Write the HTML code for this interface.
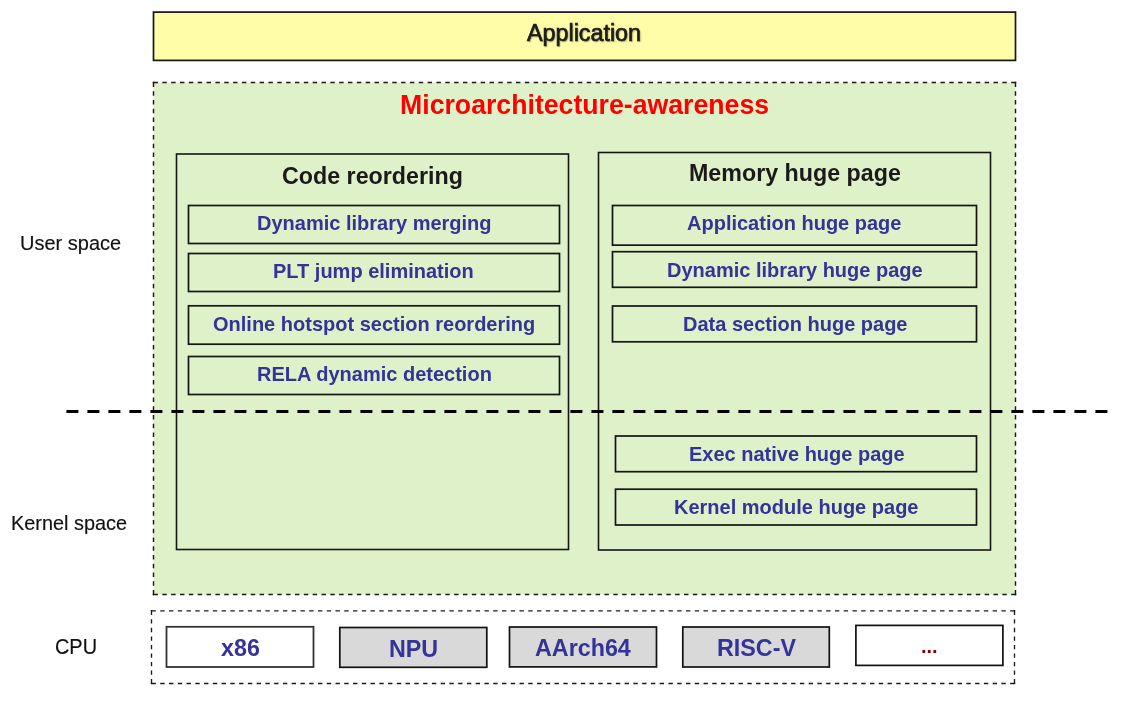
<!DOCTYPE html>
<html><head><meta charset="utf-8">
<style>
html,body{margin:0;padding:0;background:#fff;}
body{width:1136px;height:702px;position:relative;overflow:hidden;font-family:"Liberation Sans",sans-serif;}
.t{position:absolute;white-space:nowrap;line-height:1;transform:scaleY(1.025);transform-origin:0 0.8465em;will-change:transform;}
</style></head><body>
<svg width="1136" height="702" style="position:absolute;left:0;top:0">
  <rect x="153.5" y="12.1" width="862" height="48.3" fill="#FFFDA8" stroke="#151515" stroke-width="1.7"/>
  <rect x="153.5" y="82.5" width="862" height="512" fill="#DEF1C8"/>
<line x1="152.78" y1="82.50" x2="1016.23" y2="82.50" stroke="#1a1a1a" stroke-width="1.45" stroke-dasharray="5.146 4.421 4.421 4.421 4.421 4.421 4.421 4.421 4.421 4.421 4.421 4.421 4.421 4.421 4.421 4.421 4.421 4.421 4.421 4.421 4.421 4.421 4.421 4.421 4.421 4.421 4.421 4.421 4.421 4.421 4.421 4.421 4.421 4.421 4.421 4.421 4.421 4.421 4.421 4.421 4.421 4.421 4.421 4.421 4.421 4.421 4.421 4.421 4.421 4.421 4.421 4.421 4.421 4.421 4.421 4.421 4.421 4.421 4.421 4.421 4.421 4.421 4.421 4.421 4.421 4.421 4.421 4.421 4.421 4.421 4.421 4.421 4.421 4.421 4.421 4.421 4.421 4.421 4.421 4.421 4.421 4.421 4.421 4.421 4.421 4.421 4.421 4.421 4.421 4.421 4.421 4.421 4.421 4.421 4.421 4.421 4.421 4.421 4.421 4.421 4.421 4.421 4.421 4.421 4.421 4.421 4.421 4.421 4.421 4.421 4.421 4.421 4.421 4.421 4.421 4.421 4.421 4.421 4.421 4.421 4.421 4.421 4.421 4.421 4.421 4.421 4.421 4.421 4.421 4.421 4.421 4.421 4.421 4.421 4.421 4.421 4.421 4.421 4.421 4.421 4.421 4.421 4.421 4.421 4.421 4.421 4.421 4.421 4.421 4.421 4.421 4.421 4.421 4.421 4.421 4.421 4.421 4.421 4.421 4.421 4.421 4.421 4.421 4.421 4.421 4.421 4.421 4.421 4.421 4.421 4.421 4.421 4.421 4.421 4.421 4.421 4.421 4.421 4.421 4.421 4.421 4.421 4.421 4.421 4.421 4.421 4.421 4.421 4.421 4.421 4.421 4.421 4.421 4.421 5.146 1000"/>
<line x1="153.50" y1="81.78" x2="153.50" y2="595.23" stroke="#1a1a1a" stroke-width="1.45" stroke-dasharray="5.101 4.376 4.376 4.376 4.376 4.376 4.376 4.376 4.376 4.376 4.376 4.376 4.376 4.376 4.376 4.376 4.376 4.376 4.376 4.376 4.376 4.376 4.376 4.376 4.376 4.376 4.376 4.376 4.376 4.376 4.376 4.376 4.376 4.376 4.376 4.376 4.376 4.376 4.376 4.376 4.376 4.376 4.376 4.376 4.376 4.376 4.376 4.376 4.376 4.376 4.376 4.376 4.376 4.376 4.376 4.376 4.376 4.376 4.376 4.376 4.376 4.376 4.376 4.376 4.376 4.376 4.376 4.376 4.376 4.376 4.376 4.376 4.376 4.376 4.376 4.376 4.376 4.376 4.376 4.376 4.376 4.376 4.376 4.376 4.376 4.376 4.376 4.376 4.376 4.376 4.376 4.376 4.376 4.376 4.376 4.376 4.376 4.376 4.376 4.376 4.376 4.376 4.376 4.376 4.376 4.376 4.376 4.376 4.376 4.376 4.376 4.376 4.376 4.376 4.376 4.376 5.101 1000"/>
<line x1="1015.50" y1="81.78" x2="1015.50" y2="595.23" stroke="#1a1a1a" stroke-width="1.45" stroke-dasharray="5.101 4.376 4.376 4.376 4.376 4.376 4.376 4.376 4.376 4.376 4.376 4.376 4.376 4.376 4.376 4.376 4.376 4.376 4.376 4.376 4.376 4.376 4.376 4.376 4.376 4.376 4.376 4.376 4.376 4.376 4.376 4.376 4.376 4.376 4.376 4.376 4.376 4.376 4.376 4.376 4.376 4.376 4.376 4.376 4.376 4.376 4.376 4.376 4.376 4.376 4.376 4.376 4.376 4.376 4.376 4.376 4.376 4.376 4.376 4.376 4.376 4.376 4.376 4.376 4.376 4.376 4.376 4.376 4.376 4.376 4.376 4.376 4.376 4.376 4.376 4.376 4.376 4.376 4.376 4.376 4.376 4.376 4.376 4.376 4.376 4.376 4.376 4.376 4.376 4.376 4.376 4.376 4.376 4.376 4.376 4.376 4.376 4.376 4.376 4.376 4.376 4.376 4.376 4.376 4.376 4.376 4.376 4.376 4.376 4.376 4.376 4.376 4.376 4.376 4.376 4.376 5.101 1000"/>
<line x1="152.78" y1="594.50" x2="1016.23" y2="594.50" stroke="#1a1a1a" stroke-width="1.45" stroke-dasharray="5.146 4.421 4.421 4.421 4.421 4.421 4.421 4.421 4.421 4.421 4.421 4.421 4.421 4.421 4.421 4.421 4.421 4.421 4.421 4.421 4.421 4.421 4.421 4.421 4.421 4.421 4.421 4.421 4.421 4.421 4.421 4.421 4.421 4.421 4.421 4.421 4.421 4.421 4.421 4.421 4.421 4.421 4.421 4.421 4.421 4.421 4.421 4.421 4.421 4.421 4.421 4.421 4.421 4.421 4.421 4.421 4.421 4.421 4.421 4.421 4.421 4.421 4.421 4.421 4.421 4.421 4.421 4.421 4.421 4.421 4.421 4.421 4.421 4.421 4.421 4.421 4.421 4.421 4.421 4.421 4.421 4.421 4.421 4.421 4.421 4.421 4.421 4.421 4.421 4.421 4.421 4.421 4.421 4.421 4.421 4.421 4.421 4.421 4.421 4.421 4.421 4.421 4.421 4.421 4.421 4.421 4.421 4.421 4.421 4.421 4.421 4.421 4.421 4.421 4.421 4.421 4.421 4.421 4.421 4.421 4.421 4.421 4.421 4.421 4.421 4.421 4.421 4.421 4.421 4.421 4.421 4.421 4.421 4.421 4.421 4.421 4.421 4.421 4.421 4.421 4.421 4.421 4.421 4.421 4.421 4.421 4.421 4.421 4.421 4.421 4.421 4.421 4.421 4.421 4.421 4.421 4.421 4.421 4.421 4.421 4.421 4.421 4.421 4.421 4.421 4.421 4.421 4.421 4.421 4.421 4.421 4.421 4.421 4.421 4.421 4.421 4.421 4.421 4.421 4.421 4.421 4.421 4.421 4.421 4.421 4.421 4.421 4.421 4.421 4.421 4.421 4.421 4.421 4.421 5.146 1000"/>
  <rect x="176.5" y="154" width="392" height="395.5" fill="none" stroke="#151515" stroke-width="1.6"/>
  <rect x="598.5" y="152.5" width="392" height="397.5" fill="none" stroke="#151515" stroke-width="1.6"/>
  <rect x="188.5" y="205.5" width="371" height="38" fill="none" stroke="#151515" stroke-width="1.7"/>
  <rect x="188.5" y="253.5" width="371" height="38" fill="none" stroke="#151515" stroke-width="1.7"/>
  <rect x="188.5" y="305.8" width="371" height="38.4" fill="none" stroke="#151515" stroke-width="1.7"/>
  <rect x="188.5" y="356.5" width="371" height="38" fill="none" stroke="#151515" stroke-width="1.7"/>
  <rect x="612.5" y="205.5" width="364" height="39.65" fill="none" stroke="#151515" stroke-width="1.7"/>
  <rect x="612.5" y="251.7" width="364" height="35.6" fill="none" stroke="#151515" stroke-width="1.7"/>
  <rect x="612.5" y="306" width="364" height="35.8" fill="none" stroke="#151515" stroke-width="1.7"/>
  <rect x="615.5" y="436" width="361" height="35.7" fill="none" stroke="#151515" stroke-width="1.7"/>
  <rect x="615.5" y="489.2" width="361" height="35.8" fill="none" stroke="#151515" stroke-width="1.7"/>
  <line x1="66.4" y1="411.5" x2="1108" y2="411.5" stroke="#000" stroke-width="3" stroke-dasharray="12 9"/>
  <line x1="150.82" y1="610.80" x2="1015.17" y2="610.80" stroke="#1a1a1a" stroke-width="1.35" stroke-dasharray="5.056 4.381 4.381 4.381 4.381 4.381 4.381 4.381 4.381 4.381 4.381 4.381 4.381 4.381 4.381 4.381 4.381 4.381 4.381 4.381 4.381 4.381 4.381 4.381 4.381 4.381 4.381 4.381 4.381 4.381 4.381 4.381 4.381 4.381 4.381 4.381 4.381 4.381 4.381 4.381 4.381 4.381 4.381 4.381 4.381 4.381 4.381 4.381 4.381 4.381 4.381 4.381 4.381 4.381 4.381 4.381 4.381 4.381 4.381 4.381 4.381 4.381 4.381 4.381 4.381 4.381 4.381 4.381 4.381 4.381 4.381 4.381 4.381 4.381 4.381 4.381 4.381 4.381 4.381 4.381 4.381 4.381 4.381 4.381 4.381 4.381 4.381 4.381 4.381 4.381 4.381 4.381 4.381 4.381 4.381 4.381 4.381 4.381 4.381 4.381 4.381 4.381 4.381 4.381 4.381 4.381 4.381 4.381 4.381 4.381 4.381 4.381 4.381 4.381 4.381 4.381 4.381 4.381 4.381 4.381 4.381 4.381 4.381 4.381 4.381 4.381 4.381 4.381 4.381 4.381 4.381 4.381 4.381 4.381 4.381 4.381 4.381 4.381 4.381 4.381 4.381 4.381 4.381 4.381 4.381 4.381 4.381 4.381 4.381 4.381 4.381 4.381 4.381 4.381 4.381 4.381 4.381 4.381 4.381 4.381 4.381 4.381 4.381 4.381 4.381 4.381 4.381 4.381 4.381 4.381 4.381 4.381 4.381 4.381 4.381 4.381 4.381 4.381 4.381 4.381 4.381 4.381 4.381 4.381 4.381 4.381 4.381 4.381 4.381 4.381 4.381 4.381 4.381 4.381 4.381 4.381 5.056 1000"/>
<line x1="151.50" y1="610.12" x2="151.50" y2="684.17" stroke="#1a1a1a" stroke-width="1.35" stroke-dasharray="4.944 4.269 4.269 4.269 4.269 4.269 4.269 4.269 4.269 4.269 4.269 4.269 4.269 4.269 4.269 4.269 4.944 1000"/>
<line x1="1014.50" y1="610.12" x2="1014.50" y2="684.17" stroke="#1a1a1a" stroke-width="1.35" stroke-dasharray="4.944 4.269 4.269 4.269 4.269 4.269 4.269 4.269 4.269 4.269 4.269 4.269 4.269 4.269 4.269 4.269 4.944 1000"/>
<line x1="150.82" y1="683.50" x2="1015.17" y2="683.50" stroke="#1a1a1a" stroke-width="1.35" stroke-dasharray="5.056 4.381 4.381 4.381 4.381 4.381 4.381 4.381 4.381 4.381 4.381 4.381 4.381 4.381 4.381 4.381 4.381 4.381 4.381 4.381 4.381 4.381 4.381 4.381 4.381 4.381 4.381 4.381 4.381 4.381 4.381 4.381 4.381 4.381 4.381 4.381 4.381 4.381 4.381 4.381 4.381 4.381 4.381 4.381 4.381 4.381 4.381 4.381 4.381 4.381 4.381 4.381 4.381 4.381 4.381 4.381 4.381 4.381 4.381 4.381 4.381 4.381 4.381 4.381 4.381 4.381 4.381 4.381 4.381 4.381 4.381 4.381 4.381 4.381 4.381 4.381 4.381 4.381 4.381 4.381 4.381 4.381 4.381 4.381 4.381 4.381 4.381 4.381 4.381 4.381 4.381 4.381 4.381 4.381 4.381 4.381 4.381 4.381 4.381 4.381 4.381 4.381 4.381 4.381 4.381 4.381 4.381 4.381 4.381 4.381 4.381 4.381 4.381 4.381 4.381 4.381 4.381 4.381 4.381 4.381 4.381 4.381 4.381 4.381 4.381 4.381 4.381 4.381 4.381 4.381 4.381 4.381 4.381 4.381 4.381 4.381 4.381 4.381 4.381 4.381 4.381 4.381 4.381 4.381 4.381 4.381 4.381 4.381 4.381 4.381 4.381 4.381 4.381 4.381 4.381 4.381 4.381 4.381 4.381 4.381 4.381 4.381 4.381 4.381 4.381 4.381 4.381 4.381 4.381 4.381 4.381 4.381 4.381 4.381 4.381 4.381 4.381 4.381 4.381 4.381 4.381 4.381 4.381 4.381 4.381 4.381 4.381 4.381 4.381 4.381 4.381 4.381 4.381 4.381 4.381 4.381 5.056 1000"/>
  <rect x="166.5" y="626.8" width="147" height="40.2" fill="#fff" stroke="#333" stroke-width="1.8"/>
  <rect x="339.8" y="627.5" width="147" height="39.8" fill="#D9D9D9" stroke="#111" stroke-width="1.7"/>
  <rect x="509.5" y="627" width="147" height="39.9" fill="#D9D9D9" stroke="#111" stroke-width="1.7"/>
  <rect x="682.8" y="627" width="146.5" height="40" fill="#D9D9D9" stroke="#111" stroke-width="1.7"/>
  <rect x="855.9" y="625.4" width="147" height="40" fill="#fff" stroke="#111" stroke-width="1.7"/>
</svg>
<div class="t" style="left:527px;top:22.00px;font-size:23.3px;font-weight:normal;color:#1a1a1a;transform:scaleY(1.06);-webkit-text-stroke:0.65px #1a1a1a;text-shadow:1px 1px 1.5px rgba(0,0,0,0.4);">Application</div>
<div class="t" style="left:400.0px;top:92.00px;font-size:26.68px;font-weight:bold;color:#FF0000;transform:scaleY(1.04);">Microarchitecture-awareness</div>
<div class="t" style="left:282.2px;top:165.00px;font-size:23.25px;font-weight:bold;color:#1a1a1a;">Code reordering</div>
<div class="t" style="left:689px;top:162.00px;font-size:23.25px;font-weight:bold;color:#1a1a1a;">Memory huge page</div>
<div class="t" style="left:257px;top:213.00px;font-size:20px;font-weight:bold;color:#333399;">Dynamic library merging</div>
<div class="t" style="left:273.3px;top:261.00px;font-size:20px;font-weight:bold;color:#333399;">PLT jump elimination</div>
<div class="t" style="left:212.5px;top:314.00px;font-size:20px;font-weight:bold;color:#333399;">Online hotspot section reordering</div>
<div class="t" style="left:257px;top:364.00px;font-size:20px;font-weight:bold;color:#333399;">RELA dynamic detection</div>
<div class="t" style="left:687px;top:213.00px;font-size:20px;font-weight:bold;color:#333399;">Application huge page</div>
<div class="t" style="left:667px;top:260.00px;font-size:20px;font-weight:bold;color:#333399;">Dynamic library huge page</div>
<div class="t" style="left:682.6px;top:314.00px;font-size:20px;font-weight:bold;color:#333399;">Data section huge page</div>
<div class="t" style="left:689px;top:444.00px;font-size:20px;font-weight:bold;color:#333399;">Exec native huge page</div>
<div class="t" style="left:674px;top:497.00px;font-size:20px;font-weight:bold;color:#333399;">Kernel module huge page</div>
<div class="t" style="left:20.3px;top:233.00px;font-size:20px;font-weight:normal;color:#111;-webkit-text-stroke:0.15px #111;">User space</div>
<div class="t" style="left:10.8px;top:514.00px;font-size:19.9px;font-weight:normal;color:#111;-webkit-text-stroke:0.15px #111;">Kernel space</div>
<div class="t" style="left:55.3px;top:638.00px;font-size:19.9px;font-weight:normal;color:#111;transform:scaleY(1.07);-webkit-text-stroke:0.15px #111;">CPU</div>
<div class="t" style="left:220.5px;top:637.00px;font-size:23.3px;font-weight:bold;color:#333399;">x86</div>
<div class="t" style="left:389px;top:638.00px;font-size:23.3px;font-weight:bold;color:#333399;">NPU</div>
<div class="t" style="left:535px;top:637.00px;font-size:23.3px;font-weight:bold;color:#333399;">AArch64</div>
<div class="t" style="left:717px;top:637.00px;font-size:23.3px;font-weight:bold;color:#333399;">RISC-V</div>
<div class="t" style="left:921.3px;top:636.00px;font-size:20px;font-weight:bold;color:#8B0000;">...</div>
</body></html>
